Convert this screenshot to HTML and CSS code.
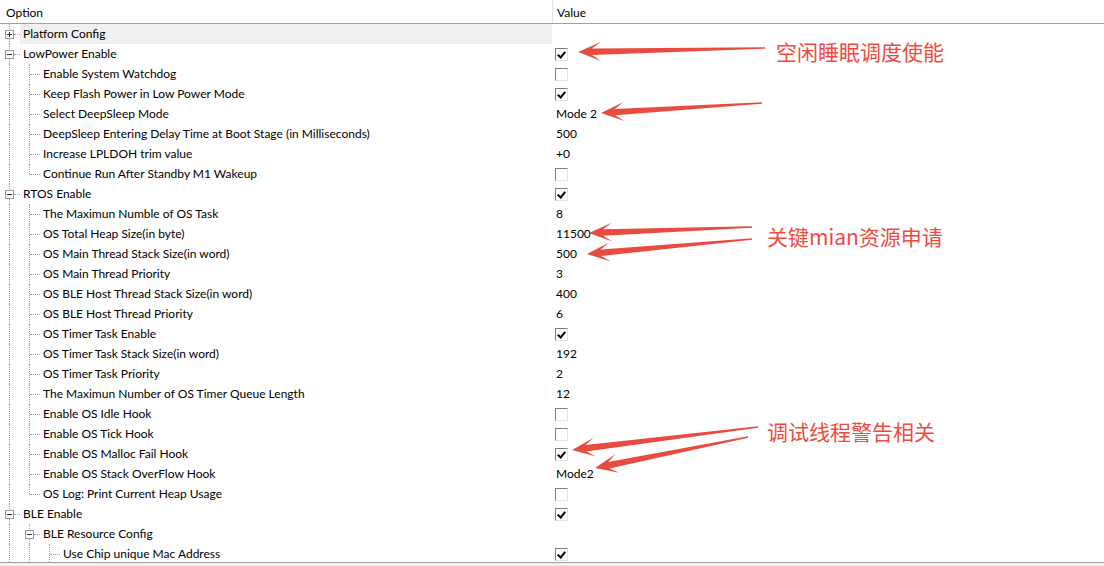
FILE: index.html
```html
<!DOCTYPE html>
<html lang="en">
<head>
  <meta charset="UTF-8">
  <title>Config Wizard</title>
  <link rel="stylesheet" href="styles.css">
</head>
<body>
  <div class="grid">
    <div class="head">
      <div class="h-opt">Option</div>
      <div class="h-val">Value</div>
    </div>

    <div class="list">
      <!-- Platform -->
      <div class="row hl"><div class="opt"><i class="tee plus"></i><span class="txt">Platform Config</span></div><div class="val"></div></div>

      <!-- LowPower -->
      <div class="row"><div class="opt"><i class="tee minus"></i><span class="txt">LowPower Enable</span></div><div class="val"><span class="cb on"></span></div></div>
      <div class="row"><div class="opt"><i class="ln"></i><i class="tee"></i><span class="txt">Enable System Watchdog</span></div><div class="val"><span class="cb"></span></div></div>
      <div class="row"><div class="opt"><i class="ln"></i><i class="tee"></i><span class="txt">Keep Flash Power in Low Power Mode</span></div><div class="val"><span class="cb on"></span></div></div>
      <div class="row"><div class="opt"><i class="ln"></i><i class="tee"></i><span class="txt">Select DeepSleep Mode</span></div><div class="val">Mode 2</div></div>
      <div class="row"><div class="opt"><i class="ln"></i><i class="tee"></i><span class="txt">DeepSleep Entering Delay Time at Boot Stage (in Milliseconds)</span></div><div class="val">500</div></div>
      <div class="row"><div class="opt"><i class="ln"></i><i class="tee"></i><span class="txt">Increase LPLDOH trim value</span></div><div class="val">+0</div></div>
      <div class="row"><div class="opt"><i class="ln"></i><i class="end"></i><span class="txt">Continue Run After Standby M1 Wakeup</span></div><div class="val"><span class="cb"></span></div></div>

      <!-- RTOS -->
      <div class="row"><div class="opt"><i class="tee minus"></i><span class="txt">RTOS Enable</span></div><div class="val"><span class="cb on"></span></div></div>
      <div class="row"><div class="opt"><i class="ln"></i><i class="tee"></i><span class="txt">The Maximun Numble of OS Task</span></div><div class="val">8</div></div>
      <div class="row"><div class="opt"><i class="ln"></i><i class="tee"></i><span class="txt">OS Total Heap Size(in byte)</span></div><div class="val">11500</div></div>
      <div class="row"><div class="opt"><i class="ln"></i><i class="tee"></i><span class="txt">OS Main Thread Stack Size(in word)</span></div><div class="val">500</div></div>
      <div class="row"><div class="opt"><i class="ln"></i><i class="tee"></i><span class="txt">OS Main Thread Priority</span></div><div class="val">3</div></div>
      <div class="row"><div class="opt"><i class="ln"></i><i class="tee"></i><span class="txt">OS BLE Host Thread Stack Size(in word)</span></div><div class="val">400</div></div>
      <div class="row"><div class="opt"><i class="ln"></i><i class="tee"></i><span class="txt">OS BLE Host Thread Priority</span></div><div class="val">6</div></div>
      <div class="row"><div class="opt"><i class="ln"></i><i class="tee"></i><span class="txt">OS Timer Task Enable</span></div><div class="val"><span class="cb on"></span></div></div>
      <div class="row"><div class="opt"><i class="ln"></i><i class="tee"></i><span class="txt">OS Timer Task Stack Size(in word)</span></div><div class="val">192</div></div>
      <div class="row"><div class="opt"><i class="ln"></i><i class="tee"></i><span class="txt">OS Timer Task Priority</span></div><div class="val">2</div></div>
      <div class="row"><div class="opt"><i class="ln"></i><i class="tee"></i><span class="txt">The Maximun Number of OS Timer Queue Length</span></div><div class="val">12</div></div>
      <div class="row"><div class="opt"><i class="ln"></i><i class="tee"></i><span class="txt">Enable OS Idle Hook</span></div><div class="val"><span class="cb"></span></div></div>
      <div class="row"><div class="opt"><i class="ln"></i><i class="tee"></i><span class="txt">Enable OS Tick Hook</span></div><div class="val"><span class="cb"></span></div></div>
      <div class="row"><div class="opt"><i class="ln"></i><i class="tee"></i><span class="txt">Enable OS Malloc Fail Hook</span></div><div class="val"><span class="cb on"></span></div></div>
      <div class="row"><div class="opt"><i class="ln"></i><i class="tee"></i><span class="txt">Enable OS Stack OverFlow Hook</span></div><div class="val">Mode2</div></div>
      <div class="row"><div class="opt"><i class="ln"></i><i class="end"></i><span class="txt">OS Log: Print Current Heap Usage</span></div><div class="val"><span class="cb"></span></div></div>

      <!-- BLE -->
      <div class="row"><div class="opt"><i class="tee minus"></i><span class="txt">BLE Enable</span></div><div class="val"><span class="cb on"></span></div></div>
      <div class="row"><div class="opt"><i class="ln"></i><i class="tee minus"></i><span class="txt">BLE Resource Config</span></div><div class="val"></div></div>
      <div class="row"><div class="opt"><i class="ln"></i><i class="ln"></i><i class="tee"></i><span class="txt">Use Chip unique Mac Address</span></div><div class="val"><span class="cb on"></span></div></div>
    </div>

    <div class="foot"></div>
  </div>

  <!-- annotations drawn over the grid -->
  <svg class="marks" width="1104" height="566" id="marks"></svg>
  <div class="note n1">空闲睡眠调度使能</div>
  <div class="note n2">关键mian资源申请</div>
  <div class="note n3">调试线程警告相关</div>

  <script>
    // tail x, tail y, tip x, tip y
    const arrows = [
      [765, 48, 578, 52],
      [762, 103, 601, 113],
      [752, 227, 589, 233],
      [752, 239, 587, 254],
      [758, 427, 572, 450],
      [748, 437, 595, 468]
    ];

    const svg = document.getElementById('marks');

    arrows.forEach(([x1, y1, x2, y2]) => {
      const dx = x2 - x1, dy = y2 - y1;
      const len = Math.hypot(dx, dy);
      const ux = dx / len, uy = dy / len;
      const nx = -uy, ny = ux;
      const neck = [x2 - ux * 14, y2 - uy * 14];
      const barb = [x2 - ux * 23, y2 - uy * 23];
      const pts = [
        [x1 + nx * 0.7, y1 + ny * 0.7],
        [neck[0] + nx * 3.2, neck[1] + ny * 3.2],
        [barb[0] + nx * 9.5, barb[1] + ny * 9.5],
        [x2, y2],
        [barb[0] - nx * 9.5, barb[1] - ny * 9.5],
        [neck[0] - nx * 3.2, neck[1] - ny * 3.2],
        [x1 - nx * 0.7, y1 - ny * 0.7]
      ];
      const poly = document.createElementNS('http://www.w3.org/2000/svg', 'polygon');
      poly.setAttribute('points', pts.map(p => p[0].toFixed(1) + ',' + p[1].toFixed(1)).join(' '));
      poly.setAttribute('fill', '#ea4b40');
      svg.appendChild(poly);
    });
  </script>
</body>
</html>
```

FILE: styles.css
```css
body {
  margin: 0;
  background: white;
  color: black;
  font-family: Lato, "Liberation Sans", sans-serif;
  font-size: 12px;
  width: 1104px;
  height: 566px;
  overflow: hidden;
  position: relative;
}

.grid {
  display: flex;
  flex-direction: column;
  height: 566px;
}

/* Header */
.head {
  display: flex;
  height: 23px;
  border-bottom: 1px solid #a0a0a0;
  flex-shrink: 0;
}
.h-opt {
  width: 546px;
  padding-left: 6px;
  padding-top: 1px;
  border-right: 1px solid #e5e5e5;
  display: flex;
  align-items: center;
}
.h-val {
  padding-left: 4px;
  padding-top: 1px;
  display: flex;
  align-items: center;
}

/* Rows */
.list {
  height: 538px;
  overflow: hidden;
  flex-shrink: 0;
}
.row {
  display: flex;
  height: 20px;
}
.opt {
  width: 552px;
  display: flex;
  align-items: stretch;
  flex-shrink: 0;
}
.txt {
  flex: 1;
  padding-left: 3px;
  padding-bottom: 2px;
  display: flex;
  align-items: center;
  white-space: nowrap;
}
.hl .txt {
  background: #f0f0f0;
}
.val {
  flex: 1;
  padding-left: 4px;
  padding-bottom: 2px;
  display: flex;
  align-items: center;
}

/* Tree guides */
.ln, .tee, .end {
  width: 20px;
  flex-shrink: 0;
  position: relative;
}
.ln::before, .tee::before, .end::before {
  content: "";
  position: absolute;
  left: 9px;
  top: 0;
  bottom: 0;
  border-left: 1px dotted #a0a0a0;
}
.end::before {
  bottom: 10px;
}
.tee::after, .end::after {
  content: "";
  position: absolute;
  left: 10px;
  right: 0;
  top: 10px;
  border-top: 1px dotted #a0a0a0;
}

/* Expander boxes */
.plus::before, .minus::before {
  left: 5px;
  top: 6px;
  bottom: auto;
  width: 7px;
  height: 7px;
  border: 1px solid #999;
  background:
    linear-gradient(#333, #333) 1px 3px / 5px 1px no-repeat,
    white;
}
.plus::before {
  background:
    linear-gradient(#333, #333) 1px 3px / 5px 1px no-repeat,
    linear-gradient(#333, #333) 3px 1px / 1px 5px no-repeat,
    white;
}
.plus::after, .minus::after {
  left: 14px;
}

/* vertical guide above and below the expander box */
.plus, .minus {
  background:
    repeating-linear-gradient(#a0a0a0 0 1px, transparent 1px 2px) 9px 0 / 1px 5px no-repeat,
    repeating-linear-gradient(#a0a0a0 0 1px, transparent 1px 2px) 9px 15px / 1px 5px no-repeat;
}

/* Checkboxes */
.cb {
  width: 11px;
  height: 11px;
  border: 1px solid;
  border-color: #808080 #e3e3e3 #e3e3e3 #808080;
  background: white;
  position: relative;
  margin-left: -1px;
  margin-top: 2px;
}
.cb.on::after {
  content: "";
  position: absolute;
  left: 3px;
  top: 1px;
  width: 3px;
  height: 6px;
  border-right: 2px solid black;
  border-bottom: 2px solid black;
  transform: rotate(40deg);
}

/* Bottom edge */
.foot {
  flex: 1;
  border-top: 1px solid #a0a0a0;
  background: #f0f0f0;
}

/* Annotations */
.marks {
  position: absolute;
  left: 0;
  top: 0;
  pointer-events: none;
}
.note {
  position: absolute;
  color: #ef4b41;
  font-family: "Noto Sans CJK SC", sans-serif;
  font-size: 21px;
  line-height: 24px;
  white-space: nowrap;
}
.n1 { left: 776px; top: 39px; }
.n2 { left: 767px; top: 224px; }
.n3 { left: 767px; top: 419px; }
```
